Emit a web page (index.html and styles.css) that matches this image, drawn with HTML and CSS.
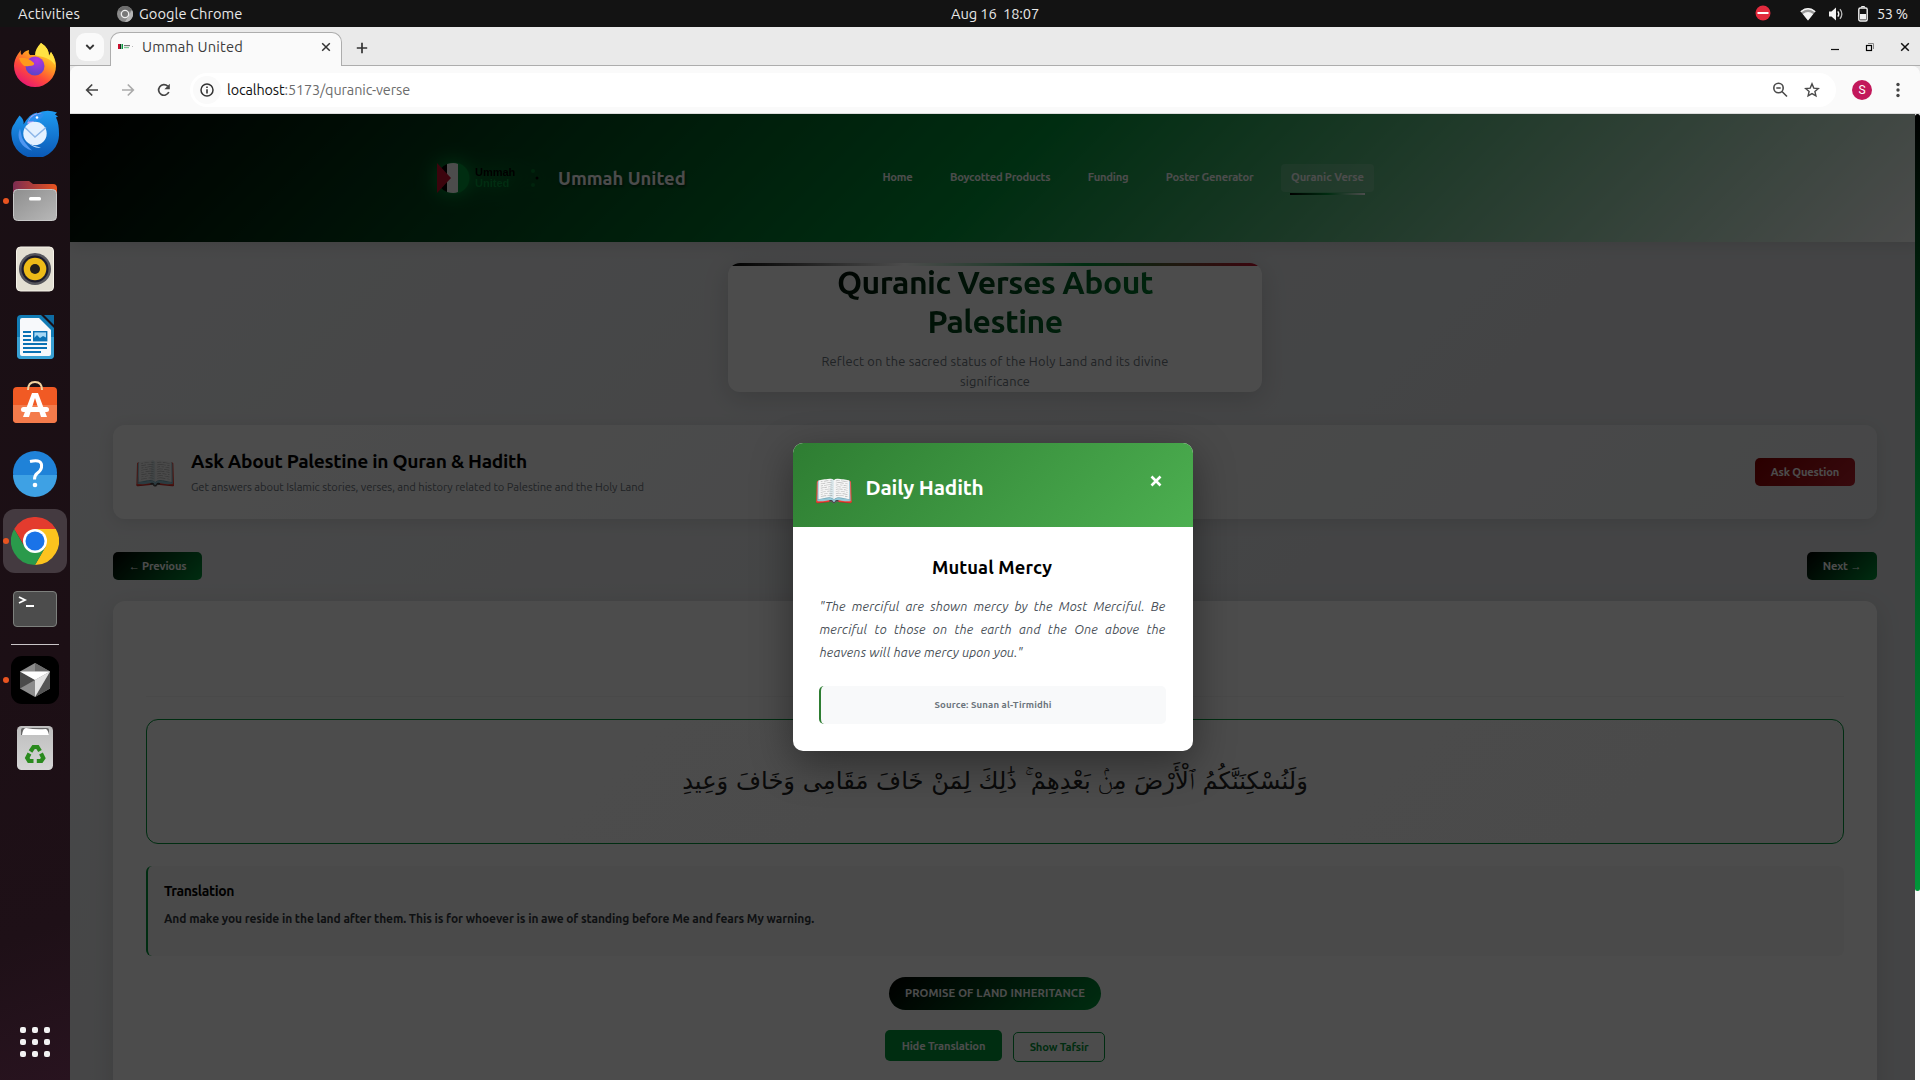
FILE: index.html
```html
<!DOCTYPE html>
<html lang="en">
<head>
<meta charset="utf-8">
<title>Ummah United</title>
<link rel="stylesheet" href="styles.css">
</head>
<body>
<div class="desktop">
  <div class="topbar">
    <span class="activities">Activities</span>
    <span class="app-menu">
      <svg width="16" height="16" viewBox="0 0 16 16"><circle cx="8" cy="8" r="8" fill="#8a8a8a"/><path d="M8 8L1 4A8 8 0 0 1 15 4z" fill="#6c6c6c"/><path d="M8 16l4-7 3-5a8 8 0 0 1-7 12z" fill="#b5b5b5"/><circle cx="8" cy="8" r="4.3" fill="#eee"/><circle cx="8" cy="8" r="3" fill="#777"/></svg>
      <span>Google Chrome</span>
    </span>
    <span class="clock">Aug 16&nbsp; 18:07</span>
    <span class="tray">
      <svg class="dnd" width="16" height="16" viewBox="0 0 16 16"><circle cx="8" cy="8" r="7.5" fill="#e22a3d"/><rect x="2.5" y="7" width="11" height="2" fill="#fff"/></svg>
      <svg class="wifi" width="16" height="14" viewBox="0 0 16 14"><path d="M8 13.5L.4 4.2Q8-2 15.6 4.2z" fill="#9a9a9a"/><path d="M.4 4.2Q8-2 15.6 4.2l-.9 1.1Q8-.3 1.3 5.3z" fill="#f2f2f2"/><path d="M8 13.5L2.8 7Q8 2.8 13.2 7z" fill="#f2f2f2"/></svg>
      <svg class="volume" width="16" height="14" viewBox="0 0 16 14"><path d="M1 4.5h2.5L8 .5v13L3.500 9.500H1z" fill="#f2f2f2"/><path d="M9.800 4.300q2 2.700 0 5.400" fill="none" stroke="#f2f2f2" stroke-width="1.300"/><path d="M12 2.200q3.700 4.800 0 9.600" fill="none" stroke="#bbb" stroke-width="1.300"/></svg>
      <svg class="battery" width="10" height="16" viewBox="0 0 10 16"><path d="M3.500 1.500v-1h3v1" fill="none" stroke="#f2f2f2"/><rect x=".8" y="2" width="8.400" height="13" rx="1.500" fill="none" stroke="#f2f2f2" stroke-width="1.400"/><rect x="2" y="8" width="6" height="5.500" fill="#f2f2f2"/></svg>
      <span class="percent">53 %</span>
    </span>
  </div>

  <div class="workspace">
    <nav class="dock">
      <div class="cell">
        <svg width="48" height="48" viewBox="0 0 48 48">
          <defs><linearGradient id="ff" x1=".8" y1="0" x2=".2" y2="1"><stop offset="0" stop-color="#fff04a"/><stop offset=".35" stop-color="#ffa51f"/><stop offset=".65" stop-color="#ff4b3a"/><stop offset="1" stop-color="#e30f7c"/></linearGradient>
          <radialGradient id="ffg" cx=".6" cy=".2" r=".9"><stop offset="0" stop-color="#b833e1"/><stop offset="1" stop-color="#4f46c8"/></radialGradient></defs>
          <path d="M30 2q8 5 8 13l2-4q5 7 5 14a21 21 0 0 1-42 0q0-6 4-12l3-4q-1 4 1 5 2-4 7-5-1 3 1 5h6q0-6 5-12z" fill="url(#ff)"/>
          <path d="M30 2q8 5 8 13l2-4q4 6 4 13-4-6-12-8-6-1-8-2 0-6 6-12z" fill="#ffe243"/>
          <circle cx="24" cy="25" r="9.500" fill="url(#ffg)"/>
          <path d="M8 17q9-1 15 5 1 3-5 3-4 1-6-1-3-3-4-7z" fill="#ff9a1c"/>
        </svg>
      </div>
      <div class="cell">
        <svg width="48" height="48" viewBox="0 -1.500 48 48">
          <defs><linearGradient id="tb" x1="0" y1="0" x2="0" y2="1"><stop offset="0" stop-color="#1f9bf0"/><stop offset="1" stop-color="#0a57b5"/></linearGradient></defs>
          <path d="M26 3q9-5 20-1l-2 2 3 2-2 1q3 6 3 16a23 23 0 0 1-47.500 2q-1-7 3-12 2-4 5-8 5 4 4 9 6-11 13.500-12z" fill="url(#tb)"/>
          <path d="M16 13Q20 1 31 3q-8 3-9 10z" fill="#b9a0f5"/><path d="M17 11Q22 2 33 3q-2 8-16 8z" fill="#2d8fee"/><circle cx="26" cy="7" r="1.300" fill="#fff"/>
          <path d="M9 18q-3 7 0 13 4 7 12 9-8-8-10-13z" fill="#4f97f2"/>
          <circle cx="24" cy="23" r="11.700" fill="#e4f1ff"/><path d="M14 17l10 9.500L35 17" fill="none" stroke="#8cb6e8" stroke-width="1.500"/>
          <path d="M18 33q5 3 12 4-7 1-12-4z" fill="#cfe6ff"/>
        </svg>
      </div>
      <div class="cell running">
        <svg width="48" height="48" viewBox="0 0 48 48">
          <defs><linearGradient id="fl"><stop stop-color="#7c2c51"/><stop offset="1" stop-color="#e9541f"/></linearGradient><linearGradient id="fg" x1="0" y1="0" x2="1" y2="1"><stop stop-color="#8e8e8e"/><stop offset="1" stop-color="#b8b8b8"/></linearGradient></defs>
          <path d="M2 16V8q0-4 4-4h12l4 3h20q4 0 4 4v8z" fill="url(#fl)"/><rect x="2.500" y="12.500" width="43" height="31" rx="4" fill="url(#fg)" stroke="#c8c8c8"/><rect x="18" y="20" width="12" height="3.500" rx="1.500" fill="#fff"/>
        </svg>
      </div>
      <div class="cell">
        <svg width="48" height="48" viewBox="0 0 48 48"><rect x="5.500" y="2" width="37" height="44" rx="4" fill="#e3dfd3" stroke="#f5f2e8"/><circle cx="24" cy="24" r="16" fill="#55555c"/><circle cx="24" cy="24" r="13.500" fill="#1c1c2c"/><circle cx="24" cy="24" r="11.300" fill="#edbb18"/><circle cx="24" cy="24" r="5" fill="#23201c"/></svg>
      </div>
      <div class="cell">
        <svg width="48" height="48" viewBox="0 0 48 48"><path d="M10 2h20l13 13v27q0 4-4 4H10q-4 0-4-4V6q0-4 4-4z" fill="#127cb5"/><path d="M6 24h37v18q0 4-4 4H10q-4 0-4-4z" fill="#38a0d3"/><path d="M11 5h17l12 12v24q0 2-2 2H11q-2 0-2-2V7q0-2 2-2z" fill="#f7f9fb"/><path d="M33 2h10v10z" fill="#0f6ca3"/><g fill="#0a72b4"><rect x="12" y="18" width="8" height="2"/><rect x="12" y="22" width="8" height="2"/><rect x="12" y="26" width="8" height="2"/><rect x="12" y="30" width="24" height="2"/><rect x="12" y="34" width="24" height="2"/><rect x="12" y="38" width="18" height="2"/></g><rect x="22.700" y="18.700" width="13" height="9" fill="#a5d8f5" stroke="#0a72b4" stroke-width="1.400"/><path d="M23 28v-3l3-3 3 3 3-2 4 2v3z" fill="#0a72b4"/></svg>
      </div>
      <div class="cell">
        <svg width="48" height="48" viewBox="0 0 48 48"><rect x="2" y="6" width="44" height="36" rx="4" fill="#f15a24"/><path d="M2 24h44v14q0 4-4 4H6q-4 0-4-4z" fill="#f47b4b"/><path d="M17 9q0-8 7-8t7 8" fill="none" stroke="#f3d3a0" stroke-width="2"/><path d="M12 36l9-24h6l9 24h-6L24 17l-6 19z" fill="#fff"/><rect x="10" y="26" width="28" height="5" rx="2.500" fill="#fff"/></svg>
      </div>
      <div class="cell">
        <svg width="48" height="48" viewBox="0 0 48 48"><circle cx="24" cy="24" r="22" fill="#1f82d8"/><path d="M2 26h44a22 22 0 0 1-44 0z" fill="#3ea1e4"/><path d="M19 12.500q13-3 11.500 6-.5 3-4.500 6-2.500 2-2.500 6" fill="none" stroke="#fff" stroke-width="3"/><circle cx="24" cy="36" r="2.300" fill="#fff"/></svg>
      </div>
      <div class="cell running active">
        <svg width="48" height="48" viewBox="0 0 48 48"><path d="M3.200 12a24 24 0 0 1 41.600 0H24L14 30z" fill="#e33b2e"/><path d="M44.800 12A24 24 0 0 1 24 48l10.400-18L24 12z" fill="#fcc31e"/><path d="M3.200 12A24 24 0 0 0 24 48l10.400-18H13.600z" fill="#2a9a4b"/><circle cx="24" cy="24" r="12" fill="#fff"/><circle cx="24" cy="24" r="9.500" fill="#1a73e8"/></svg>
      </div>
      <div class="cell">
        <svg width="48" height="48" viewBox="0 0 48 48"><rect x="2.500" y="6.500" width="43" height="35" rx="3.500" fill="#4c4c4c" stroke="#7d807d"/><path d="M8 12l6 3-6 3M15 21h8" fill="none" stroke="#fff" stroke-width="1.800"/></svg>
      </div>
      <hr class="dock-sep">
      <div class="cell running">
        <svg width="48" height="48" viewBox="0 0 48 48"><rect width="48" height="48" rx="11" fill="#000"/><path d="M24 7l15 8.500v17L24 41 9 32.500v-17z" fill="#8c8c8c"/><path d="M9 15.500v17L24 24z" fill="#4a4a4a"/><path d="M39 15.500v17L24 41z" fill="#555"/><path d="M24 7l15 8.500H24z" fill="#6b6b6b"/><path d="M9 15.500h30L24 24z" fill="#fff"/><path d="M39 15.500L24 41V24z" fill="#e2e2e2"/></svg>
      </div>
      <div class="cell">
        <svg width="48" height="48" viewBox="0 0 48 48"><defs><linearGradient id="tr" x2="0" y2="1"><stop stop-color="#bdbdbd"/><stop offset="1" stop-color="#d6d6d6"/></linearGradient></defs><rect x="6" y="2" width="36" height="44" rx="4.500" fill="url(#tr)"/><path d="M10 11V6q0-2 2-2h24q2 0 2 2v5z" fill="#666"/><path d="M11 11q1-7 4-7 10 2 20 1 2 1 3 6z" fill="#fff"/><g fill="none" stroke="#2a8a1e" stroke-width="4.200"><path d="M19.500 27.500l3-4.500h4l2.500 4"/><path d="M30 29.500l2.300 4.500-2 3h-4.500"/><path d="M22.500 37h-4.500l-1.800-3 2.300-4.500"/></g></svg>
      </div>
      <div class="app-grid"><i></i><i></i><i></i><i></i><i></i><i></i><i></i><i></i><i></i></div>
    </nav>

    <div class="browser">
      <div class="tabstrip">
        <span class="tab-search"><svg width="12" height="8" viewBox="0 0 12 8"><path d="M2.300 2L6 5.700 9.700 2" fill="none" stroke="#333" stroke-width="1.800"/></svg></span>
        <div class="tab">
          <svg class="favicon" width="16" height="6" viewBox="0 0 16 6"><rect width="2" height="5" fill="#c8102e"/><rect x="2" width="1" height="5" fill="#222"/><rect x="3.500" width="1.500" height="5" fill="#0a9a40"/><rect x="6" y="1" width="6" height="1.200" fill="#777"/><rect x="6" y="3" width="5" height="1.200" fill="#7cc795"/><rect x="14" y="2" width="1" height="1" fill="#bbb"/></svg>
          <span class="tab-title">Ummah United</span>
          <svg class="tab-close" width="10" height="10" viewBox="0 0 10 10"><path d="M1.200 1.200l7.600 7.600M8.800 1.200L1.200 8.800" stroke="#333" stroke-width="1.500"/></svg>
        </div>
        <svg class="new-tab" width="12" height="12" viewBox="0 0 12 12"><path d="M6 .8v10.400M.8 6h10.400" stroke="#333" stroke-width="1.700"/></svg>
        <span class="window-buttons">
          <svg width="10" height="12" viewBox="0 0 10 12"><path d="M1 8.500h8" stroke="#111" stroke-width="1.200"/></svg>
          <svg width="10" height="12" viewBox="0 0 10 12"><path d="M3 2.500h5.500V8" fill="none" stroke="#888"/><rect x="1.500" y="4.500" width="5" height="5" fill="none" stroke="#000" stroke-width="1.200"/></svg>
          <svg width="10" height="12" viewBox="0 0 10 12"><path d="M1.200 2.200l7.600 7.600M8.800 2.200L1.200 9.800" stroke="#111" stroke-width="1.500"/></svg>
        </span>
      </div>
      <div class="toolbar">
        <svg width="14" height="14" viewBox="0 0 14 14"><path d="M13 7H2M7.200 1.500L1.700 7l5.500 5.500" fill="none" stroke="#444" stroke-width="1.700"/></svg>
        <svg width="14" height="14" viewBox="0 0 14 14"><path d="M1 7h11M6.800 1.500L12.300 7l-5.500 5.500" fill="none" stroke="#aaa" stroke-width="1.700"/></svg>
        <svg width="14" height="14" viewBox="0 0 14 14"><path d="M11.800 9A5.300 5.300 0 1 1 10.700 3.200" fill="none" stroke="#444" stroke-width="1.700"/><path d="M12.800.8v5.400H7.400z" fill="#444"/></svg>
        <div class="omnibox">
          <span class="site-info"><svg width="14" height="14" viewBox="0 0 14 14"><circle cx="7" cy="7" r="6" fill="none" stroke="#333" stroke-width="1.500"/><path d="M7 6.200v4.200M7 3.500V5" stroke="#333" stroke-width="1.600"/></svg></span>
          <span class="url"><b>localhost</b>:5173/quranic-verse</span>
          <svg class="zoom-icon" width="16" height="16" viewBox="0 0 16 16"><circle cx="6.500" cy="6" r="4.700" fill="none" stroke="#4a4a4a" stroke-width="1.600"/><path d="M10 9.500l5 5M4.300 6h4.400" stroke="#4a4a4a" stroke-width="1.600"/></svg>
          <svg width="16" height="16" viewBox="0 0 16 16"><path d="M8 1.900l1.800 4.200 4.500.4-3.400 3 1 4.400L8 11.600l-3.900 2.300 1-4.400-3.400-3 4.500-.4z" fill="none" stroke="#4a4a4a" stroke-width="1.400"/></svg>
        </div>
        <span class="avatar">S</span>
        <svg class="kebab" width="4" height="16" viewBox="0 0 4 16"><g fill="#444"><circle cx="2" cy="2.500" r="1.700"/><circle cx="2" cy="8" r="1.700"/><circle cx="2" cy="13.500" r="1.700"/></g></svg>
      </div>

      <div class="viewport">
        <div class="page">
          <header class="site-header">
            <svg class="logo" width="104" height="40" viewBox="0 0 104 40">
              <circle cx="17" cy="20" r="15.500" fill="#009639"/><path d="M10 6a15 15 0 0 0 0 28z" fill="#000"/><path d="M10 6q7-2 11 0v28q-4 2-11 0z" fill="#fff"/><path d="M0 5l14 15L0 35z" fill="#c8102e"/>
              <g font-family="Liberation Sans, sans-serif" font-weight="700" font-size="11"><text x="38" y="17.500" fill="#000">Ummah</text><text x="38" y="28.500" fill="#009639">United</text></g>
              <circle cx="96" cy="13" r="2" fill="#007a2e"/><circle cx="96" cy="27" r="2" fill="#007a2e"/><circle cx="100" cy="20" r="1.500" fill="#000"/>
            </svg>
            <span class="brand">Ummah United</span>
            <nav class="site-nav">
              <a>Home</a><a>Boycotted Products</a><a>Funding</a><a>Poster Generator</a><a class="current">Quranic Verse</a>
            </nav>
          </header>

          <main class="content">
            <section class="hero">
              <h1>Quranic Verses About<br>Palestine</h1>
              <p>Reflect on the sacred status of the Holy Land and its divine<br>significance</p>
            </section>

            <section class="ask">
              <span class="book">📖</span>
              <div class="ask-text">
                <h2>Ask About Palestine in Quran &amp; Hadith</h2>
                <p>Get answers about Islamic stories, verses, and history related to Palestine and the Holy Land</p>
              </div>
              <button class="btn btn-ask">Ask Question</button>
            </section>

            <div class="pager">
              <button class="btn btn-prev">← Previous</button>
              <button class="btn btn-next">Next →</button>
            </div>

            <section class="verse-card">
              <div class="verse-head"></div>
              <div class="verse" lang="ar" dir="rtl">وَلَنُسْكِنَنَّكُمُ ٱلْأَرْضَ مِنۢ بَعْدِهِمْ ۚ ذَٰلِكَ لِمَنْ خَافَ مَقَامِى وَخَافَ وَعِيدِ</div>
              <div class="translation">
                <h3>Translation</h3>
                <p>And make you reside in the land after them. This is for whoever is in awe of standing before Me and fears My warning.</p>
              </div>
              <div class="theme">PROMISE OF LAND INHERITANCE</div>
              <div class="verse-actions">
                <button class="btn btn-solid">Hide Translation</button>
                <button class="btn btn-outline">Show Tafsir</button>
              </div>
            </section>
          </main>
        </div>

        <div class="overlay">
          <div class="modal">
            <div class="modal-head">
              <span class="book">📖</span>
              <h2>Daily Hadith</h2>
              <svg class="modal-close" width="12" height="12" viewBox="0 0 12 12"><path d="M1.500 1.500l9 9M10.500 1.500l-9 9" stroke="#fff" stroke-width="2.600"/></svg>
            </div>
            <div class="modal-body">
              <h3>Mutual Mercy</h3>
              <p class="quote">"The merciful are shown mercy by the Most Merciful. Be merciful to those on the earth and the One above the heavens will have mercy upon you."</p>
              <p class="source">Source: Sunan al-Tirmidhi</p>
            </div>
          </div>
        </div>
        <div class="scrollbar"></div>
      </div>
    </div>
  </div>
</div>
</body>
</html>
```
FILE: styles.css
```css
* { box-sizing: border-box; }
body { margin: 0; font-family: Ubuntu, "Noto Sans", "Open Sans", sans-serif; overflow: hidden; }
h1, h2, h3, p { margin: 0; }
svg { display: block; flex: none; }
span { white-space: nowrap; }

.desktop { width: 1920px; height: 1080px; display: flex; flex-direction: column; overflow: hidden; }

.topbar { height: 27px; background: #131313; color: #e8e8e8; font-size: 14.667px; line-height: 28px; display: grid; grid-template-columns: 99px 1fr auto; padding: 0 12px 0 18px; position: relative; flex: none; }
.activities { letter-spacing: .19px; }
.app-menu { display: flex; align-items: center; gap: 6px; letter-spacing: .05px; }
.clock { position: absolute; left: 951px; top: 0; letter-spacing: -.11px; }
.tray { display: flex; align-items: center; }
.tray .dnd { margin-right: 29px; margin-top: -2px; }
.tray .wifi { margin-right: 12px; }
.tray .volume { margin-right: 14px; }
.tray .battery { margin-right: 9px; margin-top: -1px; }
.percent { width: 31px; letter-spacing: -.4px; }

.workspace { flex: 1; display: flex; min-height: 0; }
.dock { width: 70px; background: linear-gradient(160deg, #190f14 0%, #1c0f15 60%, #1e1017 85%, #28131f 100%); display: flex; flex-direction: column; align-items: center; padding-top: 6px; }
.cell { width: 64px; height: 64px; margin-bottom: 4px; border-radius: 12px; display: flex; align-items: center; justify-content: center; position: relative; flex: none; }
.cell.active { background: #443a40; }
.cell.running::before { content: ""; position: absolute; left: 0; top: 29px; width: 6px; height: 6px; border-radius: 50%; background: #e95420; }
.dock-sep { width: 48px; height: 1px; border: 0; background: #c9c5c7; margin: -1px 0 3px; flex: none; }
.app-grid { margin-top: auto; margin-bottom: 23px; display: grid; grid-template-columns: repeat(3, 6px); gap: 6px; }
.app-grid i { width: 6px; height: 6px; border-radius: 2px; background: #f2f2f2; }

.browser { flex: 1; min-width: 0; display: flex; flex-direction: column; background: #eaeaea; }
.tabstrip { height: 39px; display: flex; align-items: center; padding: 0 10px 0 6px; box-shadow: inset 0 -1px #adadad; flex: none; }
.tab-search { width: 28px; height: 28px; border-radius: 9px; background: #fafafa; display: flex; align-items: center; justify-content: center; margin-bottom: -1px; }
.tab { width: 232px; height: 34px; margin-left: 6px; align-self: flex-end; border: 1px solid #adadad; border-bottom: 0; border-radius: 10px 10px 0 0; background: #fafafa; display: flex; align-items: center; padding: 0 10px 6px 7px; color: #3c3c3c; font-size: 14.667px; }
.tab-title { margin-left: 8px; letter-spacing: .17px; }
.tab-close { margin-left: auto; }
.new-tab { margin-left: 14px; margin-top: 2px; }
.window-buttons { margin-left: auto; display: flex; gap: 25px; margin-top: 1px; }
.toolbar { height: 48px; background: #fafafa; border-bottom: 1px solid #dcdcdc; border-radius: 8px 8px 0 0; display: flex; align-items: center; padding-left: 15px; flex: none; }
.toolbar > svg { margin-right: 22px; }
.omnibox { width: 1646px; height: 34px; margin-left: -3px; background: #fff; border-radius: 17px; display: flex; align-items: center; padding: 0 16px 0 3px; gap: 16px; }
.site-info { width: 28px; height: 28px; border-radius: 50%; background: #fafafa; display: flex; align-items: center; justify-content: center; }
.url { margin-left: -10px; flex: 1; font-size: 14.400px; letter-spacing: -.11px; color: #6c6c6c; }
.url b { font-weight: 400; color: #111; }
.avatar { width: 20px; height: 20px; margin-left: 16px; border-radius: 50%; background: #c2185b; color: #fff; font: 12px/20px Roboto, sans-serif; text-align: center; }
.toolbar > .kebab { margin: 0 0 0 24px; }

.viewport { flex: 1; position: relative; overflow: hidden; }
.page { height: 966px; background: linear-gradient(135deg, #f3f4f6 0%, #e3e5e8 60%, #e3e5e8 100%); overflow: hidden; }
.site-header { height: 128px; display: flex; align-items: center; padding: 0 546px 0 367px; background: linear-gradient(135deg, #000 0%, #009639 50%, #fff 100%); box-shadow: 0 2px 16px rgba(0, 0, 0, .12); color: #fff; }
.logo { filter: drop-shadow(0 0 10px rgba(0, 190, 75, .9)); overflow: visible; }
.brand { margin-left: 17px; font-size: 18.400px; font-weight: 700; line-height: 24px; margin-top: -1px; text-shadow: 1px 2px 3px rgba(0, 0, 0, .6); }
.site-nav { margin-left: auto; display: flex; gap: 17.500px; font-size: 11.200px; font-weight: 600; letter-spacing: -.22px; }
.site-nav a { height: 28px; line-height: 26px; padding: 0 10px; position: relative; white-space: nowrap; }
.site-nav .current { background: rgba(255, 255, 255, .15); border-radius: 4px; letter-spacing: -.05px; }
.current::after { content: ""; position: absolute; left: 9px; right: 9px; bottom: -3px; height: 2px; background: linear-gradient(90deg, #000, #009639 50%, #fff); }

.content { padding: 21px 43px 0; }
.hero { width: 534px; height: 129px; margin: 0 auto; background: #fff; border-radius: 12px; position: relative; overflow: hidden; text-align: center; box-shadow: 0 6px 26px rgba(0, 0, 0, .15); }
.hero::before { content: ""; position: absolute; inset: 0 0 auto; height: 3px; background: linear-gradient(90deg, #000 0%, #fff 33%, #009639 67%, #c8102e 100%); }
.hero h1 { width: 400px; margin: 0 auto; font-size: 32px; line-height: 39px; font-weight: 700; letter-spacing: -.55px; background: linear-gradient(135deg, #000, #009639); -webkit-background-clip: text; background-clip: text; color: transparent; }
.hero p { margin-top: 10px; font-size: 12.800px; line-height: 20px; letter-spacing: .2px; color: #6c757d; }

.ask { margin-top: 33px; height: 94px; border-radius: 12px; background: linear-gradient(135deg, #fff, #eceef0); box-shadow: 0 3px 16px rgba(0, 0, 0, .1); display: flex; align-items: center; padding: 0 22px; }
.ask .book { font-size: 34px; line-height: 40px; width: 42px; margin: 0 15px 0 -1px; }
.ask-text { flex: 1; }
.ask h2 { font-size: 19.200px; line-height: 28px; letter-spacing: -.3px; color: #000; margin-top: -1px; }
.ask p { margin-top: 2px; font-size: 11.200px; line-height: 20px; letter-spacing: -.06px; color: #6c757d; }
.btn { border: 0; height: 28px; padding: 0; border-radius: 5px; font: 600 11.200px/26px Ubuntu, "Noto Sans", sans-serif; letter-spacing: -.17px; white-space: nowrap; color: #fff; background: linear-gradient(135deg, #000, #009639); }
.btn-ask { width: 100px; background: linear-gradient(135deg, #8b0000, #b8202c); }
.btn-prev { width: 89px; }
.btn-next { width: 70px; }
.pager { margin-top: 33px; display: flex; justify-content: space-between; }

.verse-card { margin-top: 21px; height: 520px; border-radius: 12px; background: #fff; padding: 0 33px; box-shadow: 0 6px 26px rgba(0, 0, 0, .12); display: flex; flex-direction: column; }
.verse-head { height: 96px; border-bottom: 1px solid #f5f5f5; flex: none; }
.verse { margin-top: 22px; height: 125px; border: 1px solid #009639; border-radius: 12px; text-align: center; font: 24.200px/122px "DejaVu Sans", sans-serif; color: #222; background: linear-gradient(135deg, #fff, #f8f8f8); flex: none; }
.translation { margin-top: 22px; height: 90px; border-left: 2px solid #009639; border-radius: 6px; background: #f8f8f8; padding: 14px 16px; flex: none; }
.translation h3 { font-size: 14px; line-height: 22px; letter-spacing: -.37px; }
.translation p { margin-top: 7px; font-size: 12px; line-height: 20px; letter-spacing: -.08px; font-weight: 600; color: #343a40; }
.theme { align-self: center; margin-top: 21px; width: 212px; height: 33px; border-radius: 17px; background: linear-gradient(135deg, #000, #009639); color: #fff; text-align: center; font-size: 11.200px; line-height: 32px; letter-spacing: .13px; font-weight: 700; flex: none; }
.verse-actions { align-self: center; margin-top: 20px; display: flex; gap: 11px; }
.btn-solid { height: 31px; width: 117px; background: #009639; }
.btn-outline { height: 30px; width: 92px; margin-top: 2px; background: transparent; border: 1px solid #009639; color: #009639; }

.overlay { position: absolute; inset: 0 5px 0 0; background: rgba(0, 0, 0, .7); display: flex; align-items: center; justify-content: center; }
.modal { width: 400px; height: 308px; border-radius: 10px; background: #fff; overflow: hidden; box-shadow: 0 12px 40px rgba(0, 0, 0, .4); }
.modal-head { height: 84px; background: linear-gradient(135deg, #2e7d32, #4caf50); color: #fff; display: flex; align-items: center; padding: 8px 31px 0 22px; }
.modal-head .book { font-size: 32px; line-height: 40px; width: 40px; margin: 1px 12px 0 -1px; }
.modal-head h2 { font-size: 20.800px; line-height: 30px; letter-spacing: -.17px; margin-top: -2px; flex: 1; }
.modal-close { margin-top: -16px; }
.modal-body { padding: 27px 27px 0 26px; }
.modal-body h3 { font-size: 18.400px; line-height: 26px; letter-spacing: .08px; text-align: center; }
.quote { margin: 15px 0 0 1px; font-size: 12.800px; line-height: 23px; letter-spacing: .17px; font-style: italic; text-align: justify; color: #495057; }
.source { margin-top: 22px; height: 38px; border-left: 2px solid #2e7d32; border-radius: 5px; background: #f8f9fa; text-align: center; font-size: 9.600px; line-height: 37px; letter-spacing: .14px; font-weight: 700; color: #6c757d; }
.scrollbar { position: absolute; right: 0; top: 0; bottom: 0; width: 5px; background: #f8f9fa; }
.scrollbar::before { content: ""; display: block; height: 777px; border-radius: 3px; background: linear-gradient(#000, #009639); }
```
